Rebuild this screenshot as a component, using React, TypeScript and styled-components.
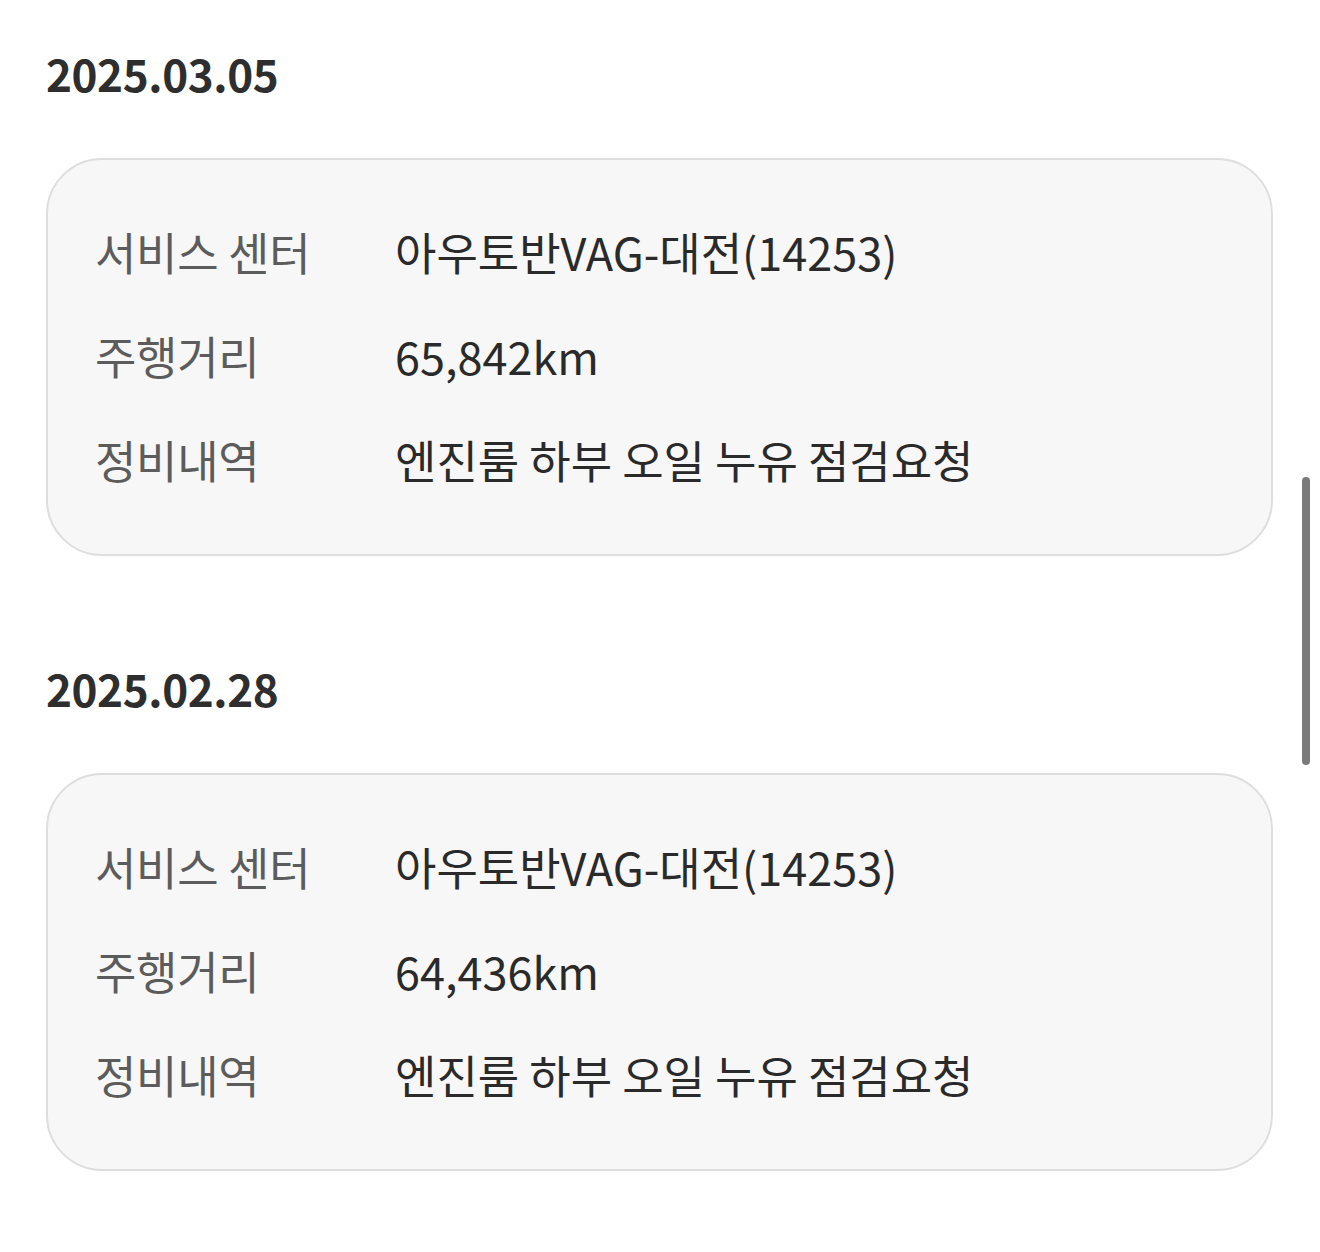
import React from "react";
import styled, { createGlobalStyle } from "styled-components";

const Global = createGlobalStyle`
  html, body { margin: 0; padding: 0; background: #ffffff; }
  body { font-family: "Noto Sans CJK KR", "Noto Sans", sans-serif; }
`;

const Page = styled.main`
  padding: 43px 47px 60px 46px;
  display: flex;
  flex-direction: column;
  gap: 102px;
`;

const Section = styled.section`
  display: flex;
  flex-direction: column;
  gap: 55px;
`;

const DateTitle = styled.h2`
  margin: 0;
  font-size: 44px;
  line-height: 60px;
  font-weight: 700;
  color: #2e2e2e;
  letter-spacing: -0.4px;
`;

const Card = styled.div`
  background: #f7f7f7;
  border: 2px solid #dedede;
  border-radius: 56px;
  padding: 39px 47px 43px;
  display: grid;
  grid-template-columns: 300px 1fr;
  grid-auto-rows: 104px;
  align-items: center;
`;

const Label = styled.div`
  font-size: 45px;
  color: #5c5c5c;
  letter-spacing: -0.3px;
`;

const Value = styled.div`
  font-size: 45px;
  color: #2a2a2a;
  letter-spacing: 0;
`;

const Scrollbar = styled.div`
  position: fixed;
  left: 1302px;
  top: 477px;
  width: 8px;
  height: 288px;
  border-radius: 4px;
  background: #7a7a7a;
`;

const records = [
  { date: "2025.03.05", center: "아우토반VAG-대전(14253)", km: "65,842km", detail: "엔진룸 하부 오일 누유 점검요청" },
  { date: "2025.02.28", center: "아우토반VAG-대전(14253)", km: "64,436km", detail: "엔진룸 하부 오일 누유 점검요청" },
];

export default function App() {
  return (
    <>
      <Global />
      <Page>
        {records.map((r) => (
          <Section key={r.date}>
            <DateTitle>{r.date}</DateTitle>
            <Card>
              <Label>서비스 센터</Label>
              <Value>{r.center}</Value>
              <Label>주행거리</Label>
              <Value>{r.km}</Value>
              <Label>정비내역</Label>
              <Value>{r.detail}</Value>
            </Card>
          </Section>
        ))}
      </Page>
      <Scrollbar />
    </>
  );
}
